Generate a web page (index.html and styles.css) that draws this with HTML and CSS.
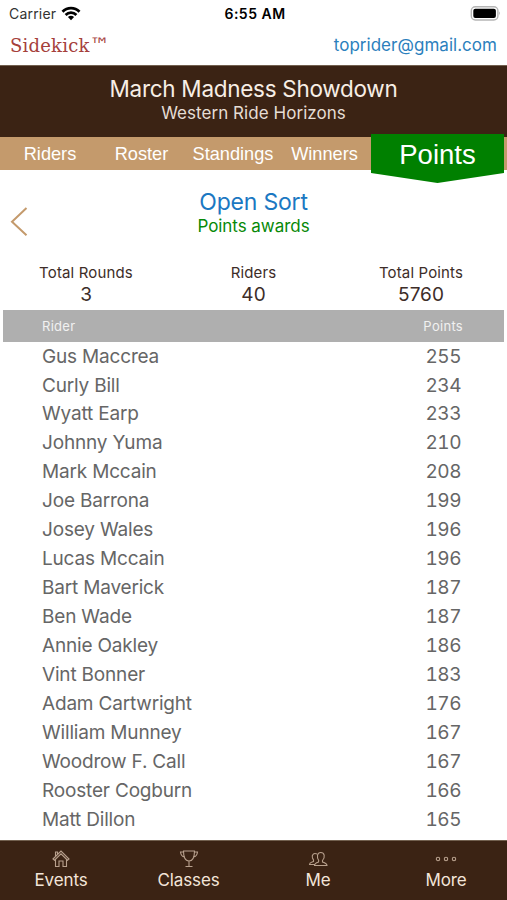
FILE: index.html
```html
<!DOCTYPE html>
<html lang="en">
<head>
<meta charset="utf-8">
<title>Sidekick</title>
<link rel="stylesheet" href="styles.css">
</head>
<body>
<div class="status">
  <div class="carrier"><span>Carrier</span>
    <svg class="wifi" width="20" height="15" viewBox="0 0 20 15" fill="none" stroke="#000" stroke-width="2.8"><path d="M1.5 5.7C6.3.9 13.700.9 18.500 5.700M4.600 8.900C7.700 5.800 12.300 5.800 15.400 8.900"/><path d="M10 14.200L6.900 11.100Q10 8.200 13.100 11.100Z" fill="#000" stroke="none"/></svg>
  </div>
  <div class="clock">6:55 AM</div>
  <svg class="battery" width="31" height="15" viewBox="0 0 31 15"><rect x="1.300" y=".8" width="26.600" height="13.200" rx="4" fill="#fff" stroke="#b5b5b5" stroke-width="1.400"/><rect x="3.300" y="2.800" width="22.600" height="9.200" rx="2" fill="#000"/><path d="M29.300 5.200q1.700 2.200 0 4.400z" fill="#999"/></svg>
</div>
<div class="account"><div class="brand">Sidekick<span>™</span></div><div class="email">toprider@gmail.com</div></div>
<header class="event"><h1>March Madness Showdown</h1><p>Western Ride Horizons</p></header>
<nav class="tabs"><a>Riders</a><a>Roster</a><a>Standings</a><a>Winners</a><a class="active"><span>Points</span></a></nav>
<section class="title">
  <svg class="back" width="20" height="32" viewBox="0 0 20 32" fill="none" stroke="#c49a6c" stroke-width="2"><path d="M17.500 2L3 15.700L17.500 29.300"/></svg>
  <h2>Open Sort</h2><p>Points awards</p>
</section>
<section class="totals">
  <div><span>Total Rounds</span><b>3</b></div><div><span>Riders</span><b>40</b></div><div><span>Total Points</span><b>5760</b></div>
</section>
<div class="head"><span>Rider</span><span>Points</span></div>
<main class="list">
  <div class="row"><span>Gus Maccrea</span><span>255</span></div>
  <div class="row"><span>Curly Bill</span><span>234</span></div>
  <div class="row"><span>Wyatt Earp</span><span>233</span></div>
  <div class="row"><span>Johnny Yuma</span><span>210</span></div>
  <div class="row"><span>Mark Mccain</span><span>208</span></div>
  <div class="row"><span>Joe Barrona</span><span>199</span></div>
  <div class="row"><span>Josey Wales</span><span>196</span></div>
  <div class="row"><span>Lucas Mccain</span><span>196</span></div>
  <div class="row"><span>Bart Maverick</span><span>187</span></div>
  <div class="row"><span>Ben Wade</span><span>187</span></div>
  <div class="row"><span>Annie Oakley</span><span>186</span></div>
  <div class="row"><span>Vint Bonner</span><span>183</span></div>
  <div class="row"><span>Adam Cartwright</span><span>176</span></div>
  <div class="row"><span>William Munney</span><span>167</span></div>
  <div class="row"><span>Woodrow F. Call</span><span>167</span></div>
  <div class="row"><span>Rooster Cogburn</span><span>166</span></div>
  <div class="row"><span>Matt Dillon</span><span>165</span></div>
</main>
<footer class="bar">
  <a><svg width="20" height="20" viewBox="0 0 20 20"><path d="M2 10L10 2L18 10L16.500 11.200L10 4.800L3.500 11.200ZM4.500 10.500V17.500H8V12H12V17.500H15.500V10.500M4.500 7V3H6.500V5"/></svg>Events</a>
  <a><svg width="20" height="20" viewBox="0 0 20 20"><path d="M4.500 2H15.500C15.500 8 14 12 10 12S4.500 8 4.500 2ZM4.600 3H1.500Q2 7.500 5.500 8M15.400 3H18.500Q18 7.500 14.500 8M10 12V17M6.500 17.500H13.500"/></svg>Classes</a>
  <a><svg width="20" height="20" viewBox="0 0 20 20"><path d="M10.500 13C7.500 14 6.500 14.500 6.500 16.500H19C19 14.500 17.500 14 14.500 13V11.500C17.500 8 16.500 3.500 12.800 3.500S8.500 8 10.700 11.500ZM9 5C5.500 3.500 3.500 6 4.500 9L5.500 11V12.500C3 13.500 1.500 13.500 1.500 15.500H6.500"/></svg>Me</a>
  <a><svg width="22" height="20" viewBox="0 0 22 20"><circle cx="3" cy="10" r="1.700"/><circle cx="11" cy="10" r="1.700"/><circle cx="19" cy="10" r="1.700"/></svg>More</a>
</footer>
</body>
</html>
```
FILE: styles.css
```css
* { box-sizing: border-box; }
body { margin: 0; width: 507px; height: 900px; overflow: hidden; display: flex; flex-direction: column; background: #fff; font-family: Inter, "Liberation Sans", sans-serif; }
h1, h2, p { margin: 0; font-weight: 400; }
.status { height: 28px; flex: none; display: grid; grid-template-columns: 1fr auto 1fr; align-items: center; padding: 0 6px 0 9px; font-size: 14px; line-height: 28px; }
.carrier { display: flex; align-items: center; gap: 5px; color: #333; letter-spacing: .2px; }
.wifi { margin-top: -2px; }
.clock { font-weight: 600; letter-spacing: .5px; }
.battery { justify-self: end; margin-top: -2px; }
.account { height: 37px; flex: none; display: flex; justify-content: space-between; padding: 0 10px 0 10px; line-height: 34px; }
.brand { font-family: "DejaVu Serif", serif; font-size: 18px; color: #a5403b; letter-spacing: .2px; padding-top: 1px; }
.brand span { display: inline-block; font-family: "DejaVu Sans", sans-serif; font-size: 20px; line-height: 20px; }
.email { font-size: 17px; color: #2b80bd; letter-spacing: .03px; }
.event { height: 72px; flex: none; background: #3b2314; border-top: 1px solid #72604f; color: #f7eee5; text-align: center; padding-top: 9px; }
.event h1 { font-size: 22.500px; line-height: 28px; letter-spacing: -.28px; }
.event p { font-size: 17px; line-height: 21px; color: #e6ddd5; letter-spacing: .05px; }
.tabs { height: 33px; flex: none; display: grid; grid-template-columns: 100px 83px 100px 83px 141px; background: #c49a6c; color: #fff; text-align: center; font: 18.200px/35px "Liberation Sans", sans-serif; }
.tabs .active { position: relative; margin: -3px 3px 0 5px; height: 49px; background: #008000; clip-path: polygon(0 0, 100% 0, 100% 39px, 50% 49px, 0 39px); font-size: 27.500px; line-height: 41px; }
.title { position: relative; height: 92px; flex: none; text-align: center; padding-top: 19px; }
.back { position: absolute; left: 9px; top: 36px; }
.title h2 { font-size: 23px; line-height: 27px; color: #1b78c2; letter-spacing: -.2px; }
.title p { font-size: 17px; line-height: 21px; color: #078907; letter-spacing: -.05px; }
.totals { height: 48px; flex: none; display: grid; grid-template-columns: 172px 163px 1fr; color: #3d2d28; text-align: center; }
.totals span { display: block; font-size: 15px; line-height: 22px; letter-spacing: .15px; }
.totals b { display: block; font-weight: 400; font-size: 19px; line-height: 21px; }
.head { margin: 0 3px; height: 32px; flex: none; background: #afafaf; color: #f1f1f1; display: flex; justify-content: space-between; padding: 0 41px 0 39px; font-size: 13px; line-height: 32px; letter-spacing: .3px; }
.list { height: 498px; flex: none; padding: .6px 46px 0 42px; color: #666; }
.row { height: 28.940px; display: flex; justify-content: space-between; font-size: 19px; line-height: 28.940px; letter-spacing: -.18px; }
.row span:last-child { letter-spacing: -.5px; font-variant-numeric: tabular-nums; }
.bar { height: 60px; flex: none; background: #3b2314; border-top: 1px solid #72604f; display: grid; grid-template-columns: 122px 133px 126px 130px; color: #f3e5d9; text-align: center; font-size: 17px; }
.bar a { display: flex; flex-direction: column; align-items: center; padding-top: 8px; line-height: 22px; letter-spacing: -.1px; }
.bar svg { fill: none; stroke: #b8a08d; stroke-width: 1.100; }
```
